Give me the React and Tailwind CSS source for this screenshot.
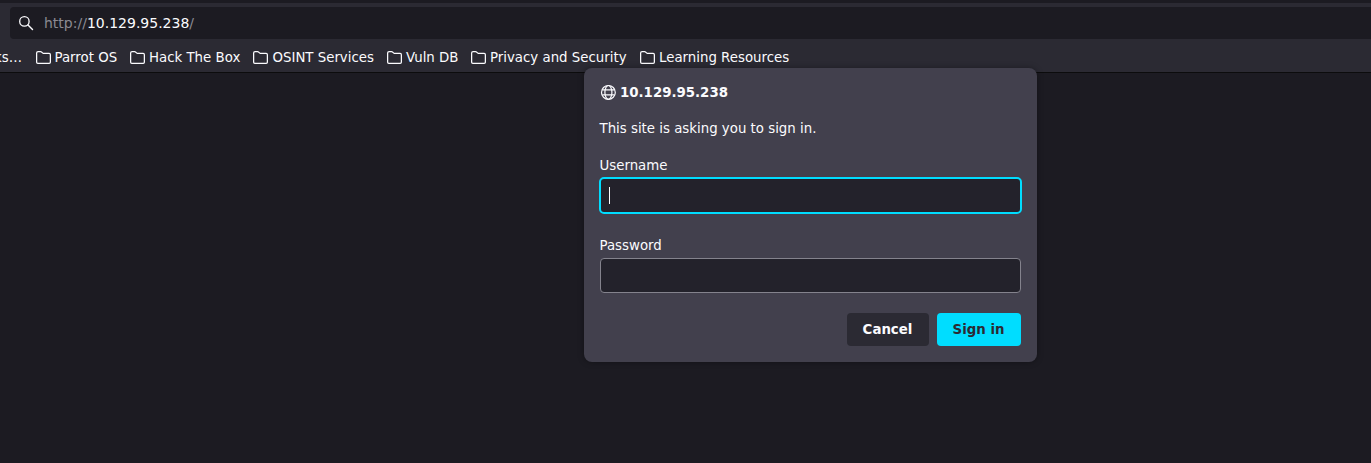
import React from "react";

const bookmarks = [
  { label: "Parrot OS", width: "w-[94px]", gap: "gap-[2.5px]" },
  { label: "Hack The Box", width: "w-[123px]", gap: "gap-[3px]" },
  { label: "OSINT Services", width: "w-[134px]", gap: "gap-[3.5px]" },
  { label: "Vuln DB", width: "w-[84px]", gap: "gap-[3px]" },
  { label: "Privacy and Security", width: "w-[169px]", gap: "gap-[3px]" },
  { label: "Learning Resources", width: "w-[160px]", gap: "gap-[3px]" },
];

function FolderIcon() {
  return (
    <svg className="h-4 w-4 shrink-0" viewBox="0 0 16 16" fill="none" stroke="currentColor" strokeWidth="1.25">
      <path d="M.63 12.3V3.1c0-.82.67-1.48 1.49-1.48h2.4c.36 0 .7.13.97.37l1.3 1.13c.27.24.61.37.97.37h5.4c.67 0 1.21.54 1.21 1.21v7.6c0 .67-.54 1.08-1.21 1.08H1.84c-.67 0-1.21-.41-1.21-1.08z" />
    </svg>
  );
}

function SearchIcon() {
  return (
    <svg className="h-4 w-4 shrink-0" viewBox="0 0 16 16" fill="none" stroke="currentColor" strokeLinecap="round">
      <circle cx="6.4" cy="6.4" r="4.7" strokeWidth="1.3" />
      <path d="M10 10l4.5 4.5" strokeWidth="1.4" />
    </svg>
  );
}

function GlobeIcon() {
  return (
    <svg className="h-4 w-4 shrink-0" viewBox="0 0 16 16" fill="none" stroke="currentColor" strokeWidth="1.2">
      <circle cx="8.4" cy="8.4" r="6.9" />
      <ellipse cx="8.4" cy="8.4" rx="3.5" ry="6.9" />
      <path d="M2.2 5.9h12.4M2.2 10.9h12.4" />
    </svg>
  );
}

function SignInDialog() {
  return (
    <div className="absolute top-[68px] left-[584px] flex h-[294px] w-[453px] flex-col rounded-lg bg-[#42404d] px-4 pt-4 text-[#fbfbfe] shadow-[0_0_6px_rgba(0,0,0,0.35)]">
      <div className="flex h-4 items-center gap-1 font-bold">
        <GlobeIcon />
        <span className="pt-0.5">10.129.95.238</span>
      </div>
      <p className="-ml-[0.5px] mt-[21px] h-4 leading-4">This site is asking you to sign in.</p>
      <label className="-ml-[0.5px] mt-[21px] h-4 leading-4">Username</label>
      <div className="-mx-px mt-[3px] flex h-[37px] items-center rounded-[5px] border-2 border-[#00ddff] bg-[#23222b] pl-2">
        <span className="h-[17px] w-px bg-[#fbfbfe]" />
      </div>
      <label className="-ml-[0.5px] mt-6 h-4 leading-4">Password</label>
      <div className="mt-1 h-[35px] rounded border border-[#84838d] bg-[#23222b]" />
      <div className="mt-5 flex justify-end gap-2 font-bold">
        <button className="h-[33px] w-[82px] rounded bg-[#2b2a33] pr-px">Cancel</button>
        <button className="h-[33px] w-[84px] rounded bg-[#00ddff] pr-px text-[#2b2a33]">Sign in</button>
      </div>
    </div>
  );
}

export default function App() {
  return (
    <div className="relative h-[463px] w-full overflow-hidden bg-[#1c1b22] font-['DejaVu_Sans',sans-serif] text-[13.333px] leading-4 text-[#fbfbfe]">
      <header className="mt-[3px] flex h-[70px] flex-col border-b border-[#0c0c0d] bg-[#2b2a33] pt-1">
        <div className="ml-2.5 flex h-8 items-center rounded-l bg-[#1c1b22] pl-2">
          <SearchIcon />
          <div className="ml-[10px] text-[14px]">
            <span className="text-[#8b8a92]">http://</span>
            <span>10.129.95.238</span>
            <span className="text-[#8b8a92]">/</span>
          </div>
        </div>
        <nav className="mt-[11px] flex h-4 items-center whitespace-nowrap">
          <div className="flex w-9 shrink-0">
            <span className="flex w-[22px] justify-end">ks…</span>
          </div>
          {bookmarks.map(({ label, width, gap }) => (
            <div key={label} className={`flex shrink-0 items-center ${gap} ${width}`}>
              <FolderIcon />
              <span>{label}</span>
            </div>
          ))}
        </nav>
      </header>
      <SignInDialog />
    </div>
  );
}
